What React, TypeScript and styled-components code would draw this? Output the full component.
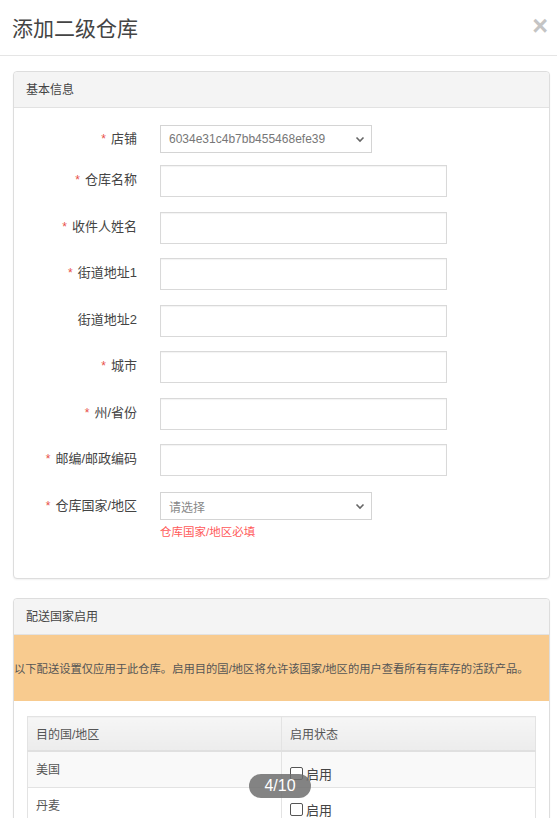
import React from 'react'
import styled, { createGlobalStyle } from 'styled-components'

const GlobalStyle = createGlobalStyle`
  html, body {
    margin: 0;
    padding: 0;
    background: #fff;
    overflow: hidden;
  }
  body {
    font-family: 'Liberation Sans', 'Noto Sans CJK SC', sans-serif;
    color: #333;
  }
`

const Modal = styled.div`
  position: relative;
  width: 557px;
  height: 818px;
  overflow: hidden;
`

const ModalHeader = styled.div`
  display: flex;
  align-items: center;
  justify-content: space-between;
  height: 55px;
  padding: 0 9px 0 12px;
  border-bottom: 1px solid #e5e5e5;
`

const Title = styled.h4`
  margin: 0;
  font-size: 21px;
  font-weight: 400;
  line-height: 26px;
  color: #444;
  padding-top: 2px;
`

const Close = styled.span`
  font-family: 'Liberation Sans', sans-serif;
  font-size: 27px;
  font-weight: 700;
  line-height: 1;
  color: #c4c4c4;
  margin-top: -3px;
`

const ModalBody = styled.div`
  padding: 15px 7px 0 13px;
`

const Panel = styled.div`
  border: 1px solid #ddd;
  border-radius: 4px;
  box-shadow: 0 1px 2px rgba(0, 0, 0, 0.06);
  margin-bottom: 19px;
  background: #fff;
`

const PanelHeading = styled.div`
  height: 35px;
  line-height: 36px;
  padding: 0 12px;
  background: #f4f4f4;
  border-bottom: 1px solid #e2e2e2;
  border-radius: 4px 4px 0 0;
  font-size: 12px;
  color: #444;
`

const FormBody = styled.div`
  padding: 17px 0 38px;
`

const FormRow = styled.div<{ $mb: number }>`
  display: flex;
  align-items: flex-start;
  margin-bottom: ${(p) => p.$mb}px;
`

const Label = styled.label<{ $top: number }>`
  width: 123px;
  flex: none;
  text-align: right;
  font-size: 13px;
  line-height: 18px;
  padding-top: ${(p) => p.$top}px;
  color: #444;
  margin-right: 23px;
`

const Star = styled.span`
  color: #e8504a;
  margin-right: 5px;
  font-size: 12px;
`

const Input = styled.input`
  box-sizing: border-box;
  width: 287px;
  height: 32px;
  border: 1px solid #d9d9d9;
  box-shadow: inset 0 1px 1px rgba(0, 0, 0, 0.05);
  outline: none;
  padding: 0 8px;
  background: #fff;
`

const Select = styled.div<{ $placeholder?: boolean }>`
  box-sizing: border-box;
  display: flex;
  align-items: center;
  justify-content: space-between;
  width: 212px;
  height: 28px;
  border: 1px solid #d4d4d4;
  padding: 0 6px 0 8px;
  font-size: 12px;
  color: ${(p) => (p.$placeholder ? '#888' : '#777')};
`

const Control = styled.div`
  display: flex;
  flex-direction: column;
`

const ErrorText = styled.div`
  margin-top: 4px;
  font-size: 11.5px;
  line-height: 16px;
  color: #ff5a5a;
`

const Notice = styled.div`
  background: #f8cb8f;
  padding: 26px 0 23px;
  font-size: 11.3px;
  line-height: 17px;
  color: #555;
  white-space: nowrap;
`

const TableWrap = styled.div`
  padding: 15px 13px 0;
`

const Table = styled.table`
  width: 100%;
  border-collapse: collapse;
  font-size: 12px;
  color: #555;
  th, td {
    border: 1px solid #e3e3e3;
    text-align: left;
    vertical-align: top;
    width: 50%;
  }
  th {
    height: 33px;
    padding: 0 8px;
    vertical-align: middle;
    font-weight: 400;
    background: linear-gradient(#f6f6f6, #ececec);
    border-bottom: 2px solid #e0e0e0;
  }
`

const Row = styled.tr<{ $striped: boolean }>`
  background: ${(p) => (p.$striped ? '#f9f9f9' : '#fff')};
  td {
    height: 36px;
    padding: 8px 8px 0;
    box-sizing: border-box;
  }
`

const CheckLabel = styled.label`
  display: flex;
  align-items: center;
  gap: 3px;
  margin-top: 4px;
  font-size: 13px;
  color: #444;
`

const Box = styled.span`
  display: inline-block;
  width: 11px;
  height: 11px;
  border: 1px solid #555;
  border-radius: 2px;
  background: #fff;
`

const Pager = styled.div`
  position: absolute;
  left: 249px;
  top: 774px;
  width: 62px;
  height: 24px;
  border-radius: 12px;
  background: rgba(110, 110, 110, 0.85);
  color: #fff;
  font-size: 16px;
  line-height: 24px;
  text-align: center;
`

const Chevron = () => (
  <svg width="10" height="7" viewBox="0 0 10 7">
    <path d="M1.5 1.5 L5 5 L8.5 1.5" fill="none" stroke="#666" strokeWidth="1.6" />
  </svg>
)

type Field = { label: string; required: boolean; kind: 'input' | 'select'; value?: string }

const fields: Field[] = [
  { label: '店铺', required: true, kind: 'select', value: '6034e31c4b7bb455468efe39' },
  { label: '仓库名称', required: true, kind: 'input' },
  { label: '收件人姓名', required: true, kind: 'input' },
  { label: '街道地址1', required: true, kind: 'input' },
  { label: '街道地址2', required: false, kind: 'input' },
  { label: '城市', required: true, kind: 'input' },
  { label: '州/省份', required: true, kind: 'input' },
  { label: '邮编/邮政编码', required: true, kind: 'input' },
]

const countries = ['美国', '丹麦']

const App = () => {
  return (
    <Modal>
      <GlobalStyle />
      <ModalHeader>
        <Title>添加二级仓库</Title>
        <Close>×</Close>
      </ModalHeader>
      <ModalBody>
        <Panel>
          <PanelHeading>基本信息</PanelHeading>
          <FormBody>
            {fields.map((f, i) => (
              <FormRow key={f.label} $mb={i === 0 ? 12 : i === fields.length - 1 ? 16 : 14.5}>
                <Label $top={f.kind === 'select' ? 5 : 6}>
                  {f.required && <Star>*</Star>}
                  {f.label}
                </Label>
                {f.kind === 'select' ? (
                  <Select>
                    {f.value}
                    <Chevron />
                  </Select>
                ) : (
                  <Input />
                )}
              </FormRow>
            ))}
            <FormRow $mb={0}>
              <Label $top={5}>
                <Star>*</Star>
                仓库国家/地区
              </Label>
              <Control>
                <Select $placeholder>
                  请选择
                  <Chevron />
                </Select>
                <ErrorText>仓库国家/地区必填</ErrorText>
              </Control>
            </FormRow>
          </FormBody>
        </Panel>
        <Panel>
          <PanelHeading>配送国家启用</PanelHeading>
          <Notice>
            以下配送设置仅应用于此仓库。启用目的国/地区将允许该国家/地区的用户查看所有有库存的活跃产品。
          </Notice>
          <TableWrap>
            <Table>
              <thead>
                <tr>
                  <th>目的国/地区</th>
                  <th>启用状态</th>
                </tr>
              </thead>
              <tbody>
                {countries.map((c, i) => (
                  <Row key={c} $striped={i % 2 === 0}>
                    <td>{c}</td>
                    <td>
                      <CheckLabel>
                        <Box />
                        启用
                      </CheckLabel>
                    </td>
                  </Row>
                ))}
              </tbody>
            </Table>
          </TableWrap>
        </Panel>
      </ModalBody>
      <Pager>4/10</Pager>
    </Modal>
  )
}

export default App
